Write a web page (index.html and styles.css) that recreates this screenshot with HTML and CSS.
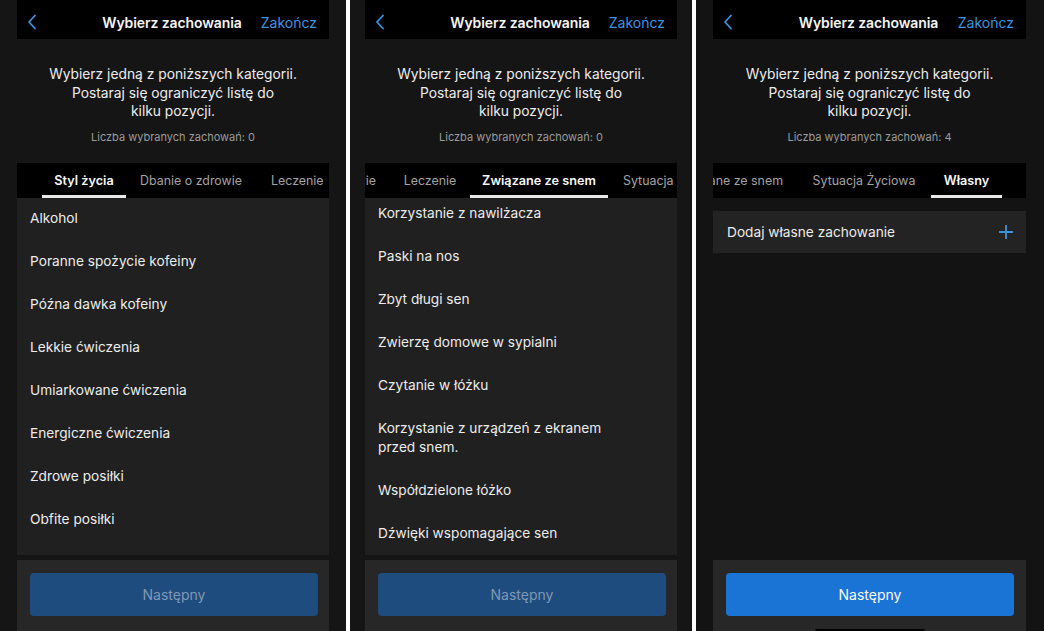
FILE: index.html
```html
<!DOCTYPE html>
<html lang="pl">
<head>
<meta charset="utf-8">
<title>Wybierz zachowania</title>
<link rel="stylesheet" href="styles.css">
</head>
<body>
<div class="page">

  <section class="panel p1">
    <div class="screen">
      <header class="nav">
        <svg class="back" viewBox="0 0 10 16" width="10" height="16"><path d="M8 1.5 L2 8 L8 14.5" fill="none" stroke="#3a93e0" stroke-width="1.8" stroke-linecap="round" stroke-linejoin="round"/></svg>
        <h1 class="title">Wybierz zachowania</h1>
        <span class="done">Zakończ</span>
      </header>
      <div class="intro">
        <p class="desc">Wybierz jedną z poniższych kategorii.<br>Postaraj się ograniczyć listę do<br>kilku pozycji.</p>
        <p class="count">Liczba wybranych zachowań: 0</p>
      </div>
      <nav class="tabs">
        <div class="strip">
          <span class="tab t1 active">Styl życia</span>
          <span class="tab t2">Dbanie o zdrowie</span>
          <span class="tab cut-right p1-last"><span class="lbl">Leczenie</span></span>
        </div>
      </nav>
      <div class="list">
        <ul class="items">
          <li>Alkohol</li>
          <li>Poranne spożycie kofeiny</li>
          <li>Późna dawka kofeiny</li>
          <li>Lekkie ćwiczenia</li>
          <li>Umiarkowane ćwiczenia</li>
          <li>Energiczne ćwiczenia</li>
          <li>Zdrowe posiłki</li>
          <li>Obfite posiłki</li>
        </ul>
      </div>
      <footer class="footer">
        <button class="next disabled">Następny</button>
      </footer>
    </div>
  </section>

  <section class="panel p2">
    <div class="screen">
      <header class="nav">
        <svg class="back" viewBox="0 0 10 16" width="10" height="16"><path d="M8 1.5 L2 8 L8 14.5" fill="none" stroke="#3a93e0" stroke-width="1.8" stroke-linecap="round" stroke-linejoin="round"/></svg>
        <h1 class="title">Wybierz zachowania</h1>
        <span class="done">Zakończ</span>
      </header>
      <div class="intro">
        <p class="desc">Wybierz jedną z poniższych kategorii.<br>Postaraj się ograniczyć listę do<br>kilku pozycji.</p>
        <p class="count">Liczba wybranych zachowań: 0</p>
      </div>
      <nav class="tabs">
        <div class="strip flush">
          <span class="tab cut-left p2-first"><span class="lbl">Dbanie o zdrowie</span></span>
          <span class="tab t3">Leczenie</span>
          <span class="tab t4 active">Związane ze snem</span>
          <span class="tab cut-right p2-last"><span class="lbl">Sytuacja Życiowa</span></span>
        </div>
      </nav>
      <div class="list">
        <ul class="items">
          <li>Korzystanie z nawilżacza</li>
          <li>Paski na nos</li>
          <li>Zbyt długi sen</li>
          <li>Zwierzę domowe w sypialni</li>
          <li>Czytanie w łóżku</li>
          <li>Korzystanie z urządzeń z ekranem<br>przed snem.</li>
          <li>Współdzielone łóżko</li>
          <li>Dźwięki wspomagające sen</li>
        </ul>
      </div>
      <footer class="footer">
        <button class="next disabled">Następny</button>
      </footer>
    </div>
  </section>

  <section class="panel p3">
    <div class="screen">
      <header class="nav">
        <svg class="back" viewBox="0 0 10 16" width="10" height="16"><path d="M8 1.5 L2 8 L8 14.5" fill="none" stroke="#3a93e0" stroke-width="1.8" stroke-linecap="round" stroke-linejoin="round"/></svg>
        <h1 class="title">Wybierz zachowania</h1>
        <span class="done">Zakończ</span>
      </header>
      <div class="intro">
        <p class="desc">Wybierz jedną z poniższych kategorii.<br>Postaraj się ograniczyć listę do<br>kilku pozycji.</p>
        <p class="count">Liczba wybranych zachowań: 4</p>
      </div>
      <nav class="tabs">
        <div class="strip flush">
          <span class="tab cut-left p3-first"><span class="lbl">Związane ze snem</span></span>
          <span class="tab t5">Sytuacja Życiowa</span>
          <span class="tab t6 active">Własny</span>
        </div>
      </nav>
      <div class="custom">
        <div class="add-card">
          <span>Dodaj własne zachowanie</span>
          <svg class="plus" viewBox="0 0 14 14" width="14" height="14"><path d="M7 0.5 V13.5 M0.5 7 H13.5" stroke="#3a93e0" stroke-width="1.8" stroke-linecap="round"/></svg>
        </div>
      </div>
      <footer class="footer">
        <button class="next">Następny</button>
        <div class="home-bar"></div>
      </footer>
    </div>
  </section>

</div>
</body>
</html>
```

FILE: styles.css
```css
* { box-sizing: border-box; }

html, body {
  margin: 0;
  padding: 0;
  background: #ffffff;
}

body {
  font-family: Inter, "Liberation Sans", "Noto Sans", sans-serif;
  color: #efefef;
  -webkit-font-smoothing: antialiased;
}

.page {
  display: flex;
  gap: 4px;
  width: 1044px;
  height: 631px;
  overflow: hidden;
}

.panel {
  height: 631px;
  background: #151515;
  display: flex;
  flex: none;
}

.p1 { width: 346px; padding-left: 17px; }
.p2 { width: 342px; padding-left: 15px; }
.p3 { width: 348px; padding-left: 17px; background: #131313; }

.screen {
  width: 312px;
  height: 631px;
  display: flex;
  flex-direction: column;
}
.p3 .screen { width: 313px; }

/* Nav bar */
.nav {
  height: 39px;
  flex: none;
  background: #000;
  display: grid;
  grid-template-columns: 1fr auto 1fr;
  align-items: center;
  padding: 5px 12px 0 10px;
}

.back { justify-self: start; }

.title {
  margin: 0;
  text-align: center;
  font-size: 14px;
  font-weight: 600;
  color: #f4f4f4;
  letter-spacing: -0.1px;
  white-space: nowrap;
}

.done {
  justify-self: end;
  font-size: 14px;
  color: #3a96e2;
}

/* Intro */
.intro {
  flex: none;
  text-align: center;
  padding-top: 26px;
}

.desc {
  margin: 0;
  font-size: 13.8px;
  line-height: 18.5px;
  color: #ededed;
}

.count {
  margin: 9px 0 0;
  font-size: 11px;
  line-height: 14px;
  color: #9a9a9a;
}

/* Tabs */
.tabs {
  flex: none;
  height: 35px;
  margin-top: 19px;
  background: #000;
  overflow: hidden;
}

.strip {
  display: flex;
  height: 35px;
  padding-left: 25px;
}
.strip.flush { padding-left: 0; }

.tab {
  flex: none;
  display: flex;
  align-items: center;
  justify-content: center;
  white-space: nowrap;
  font-size: 12.4px;
  color: #a3a3a3;
  border-bottom: 3px solid transparent;
  padding-top: 3px;
}

.tab.active {
  color: #f6f6f6;
  font-weight: 600;
  font-size: 12.7px;
  border-bottom-color: #e8e8e8;
}

.t1 { width: 84px; }
.t2 { width: 130px; }
.t3 { width: 80px; }
.t4 { width: 138px; }
.t5 { width: 134px; }
.t6 { width: 71px; }

.tab.cut-left,
.tab.cut-right {
  overflow: hidden;
}
.tab.cut-left { justify-content: flex-end; }
.tab.cut-right { justify-content: flex-start; }
.cut-left .lbl { padding-right: 14px; }
.cut-right .lbl { padding-left: 15px; }

.p1-last { width: 73px; }
.p2-first { width: 25px; }
.p2-last { width: 69px; }
.p3-first { width: 84px; }

/* List */
.list {
  flex: 1;
  background: #202020;
  overflow: hidden;
}

.items {
  list-style: none;
  margin: -1px 0 0;
  padding: 0;
}
.p2 .items { margin-top: -6px; }

.items li {
  padding: 12px 13px;
  font-size: 13.7px;
  line-height: 19px;
  color: #ececec;
}

/* Custom tab */
.custom {
  flex: 1;
  padding-top: 13px;
}

.add-card {
  height: 42px;
  background: #232323;
  display: flex;
  align-items: center;
  justify-content: space-between;
  padding: 0 13px 0 14px;
  font-size: 13.7px;
  color: #ececec;
}

.plus { flex: none; }

/* Footer */
.footer {
  flex: none;
  height: 71px;
  margin-top: 5px;
  background: #272727;
  padding: 13px 11px 0 13px;
  display: flex;
  flex-direction: column;
  align-items: center;
}
.p3 .footer { margin-top: 0; padding-right: 12px; }

.next {
  width: 100%;
  height: 43px;
  flex: none;
  border: none;
  border-radius: 4px;
  background: #1a74d6;
  color: #fafafa;
  font-family: inherit;
  font-size: 14px;
  padding: 0;
}

.next.disabled {
  background: #1e4c7f;
  color: #7e98b4;
}

.home-bar {
  width: 110px;
  height: 4px;
  flex: none;
  margin-top: 13px;
  border-radius: 2px;
  background: #000;
}
```
